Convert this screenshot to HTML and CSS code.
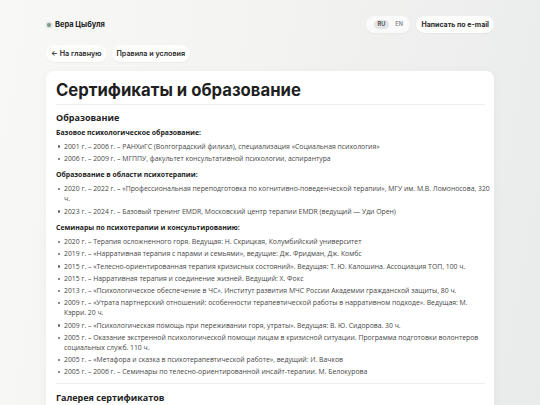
FILE: index.html
```html
<!DOCTYPE html>
<html lang="ru">
<head>
<meta charset="utf-8">
<title>Сертификаты и образование</title>
<link rel="stylesheet" href="styles.css">
</head>
<body>
<div class="page">
  <header class="topbar">
    <div class="brand"><span class="dot"></span>Вера Цыбуля</div>
    <div class="actions">
      <div class="lang"><span class="lang-item active">RU</span><span class="lang-item">EN</span></div>
      <a class="pill strong" href="#">Написать по e-mail</a>
    </div>
  </header>
  <nav class="crumbs">
    <a class="pill" href="#">← На главную</a>
    <a class="pill" href="#">Правила и условия</a>
  </nav>
  <main class="card">
    <h1 class="title">Сертификаты и образование</h1>
    <section class="section">
      <h2 class="h2">Образование</h2>
      <h3 class="h3">Базовое психологическое образование:</h3>
      <ul class="list">
        <li>2001 г. – 2006 г. – РАНХиГС (Волгоградский филиал), специализация «Социальная психология»</li>
        <li>2006 г. – 2009 г. – МГППУ, факультет консультативной психологии, аспирантура</li>
      </ul>
      <h3 class="h3">Образование в области психотерапии:</h3>
      <ul class="list">
        <li>2020 г. – 2022 г. – «Профессиональная переподготовка по когнитивно-поведенческой терапии», МГУ им. М.В. Ломоносова, 320 ч.</li>
        <li>2023 г. – 2024 г. – Базовый тренинг EMDR, Московский центр терапии EMDR (ведущий — Уди Орен)</li>
      </ul>
      <h3 class="h3">Семинары по психотерапии и консультированию:</h3>
      <ul class="list">
        <li>2020 г. – Терапия осложненного горя. Ведущая: Н. Скрицкая, Колумбийский университет</li>
        <li>2019 г. – «Нарративная терапия с парами и семьями», ведущие: Дж. Фридман, Дж. Комбс</li>
        <li>2015 г. – «Телесно-ориентированная терапия кризисных состояний». Ведущая: Т. Ю. Калошина. Ассоциация ТОП, 100 ч.</li>
        <li>2015 г. – Нарративная терапия и соединение жизней. Ведущий: Х. Фокс</li>
        <li>2013 г. – «Психологическое обеспечение в ЧС». Институт развития МЧС России Академии гражданской защиты, 80 ч.</li>
        <li>2009 г. – «Утрата партнерский отношений: особенности терапевтической работы в нарративном подходе». Ведущая: М. Кэрри. 20&nbsp;ч.</li>
        <li>2009 г. – «Психологическая помощь при переживании горя, утраты». Ведущая: В. Ю. Сидорова. 30 ч.</li>
        <li>2005 г. – Оказание экстренной психологической помощи лицам в кризисной ситуации. Программа подготовки волонтеров социальных служб. 110 ч.</li>
        <li>2005 г. – «Метафора и сказка в психотерапевтической работе», ведущий: И. Вачков</li>
        <li>2005 г. – 2006 г. – Семинары по телесно-ориентированной инсайт-терапии. М. Белокурова</li>
      </ul>
    </section>
    <section class="section gallery">
      <h2 class="h2">Галерея сертификатов</h2>
    </section>
  </main>
</div>
</body>
</html>
```
FILE: styles.css
```css
html, body {
  margin: 0;
  padding: 0;
}
body {
  min-height: 405px;
  background: linear-gradient(100deg, #f8f8f6 0%, #f3f3f1 45%, #e9ebeb 100%);
  font-family: "Open Sans", "Noto Sans", sans-serif;
  color: #3a3a3a;
  overflow: hidden;
}
.page {
  width: 448px;
  margin: 0 auto;
  padding-top: 16px;
}
.topbar {
  display: flex;
  justify-content: space-between;
  align-items: center;
  height: 17px;
}
.brand {
  display: flex;
  align-items: center;
  gap: 4px;
  font-family: "Inter", sans-serif;
  font-weight: 700;
  font-size: 7.5px;
  color: #222;
}
.dot {
  width: 4px;
  height: 4px;
  border-radius: 50%;
  background: #7f9a8c;
  box-shadow: 0 0 0 1.5px #dfe6e2;
  margin-left: 1px;
}
.actions {
  display: flex;
  align-items: center;
  gap: 6px;
}
.lang {
  display: flex;
  align-items: center;
  gap: 3px;
  height: 17px;
  padding: 0 4px 0 8px;
  border-radius: 9px;
  background: #fafafa;
  box-shadow: 0 1px 2px rgba(0,0,0,0.04);
}
.lang-item {
  font-family: "Inter", sans-serif;
  font-size: 5.6px;
  font-weight: 600;
  color: #888;
  height: 9px;
  line-height: 9px;
  padding: 0 3.5px;
  border-radius: 5px;
}
.lang-item.active {
  background: #e4e5e4;
  color: #444;
}
.pill {
  display: inline-flex;
  align-items: center;
  height: 17px;
  padding: 0 5px;
  border-radius: 9px;
  background: #fdfdfc;
  box-shadow: 0 1px 2px rgba(0,0,0,0.04);
  font-family: "Inter", sans-serif;
  font-size: 7.2px;
  font-weight: 600;
  color: #2a2a2a;
  text-decoration: none;
}
.pill.strong {
  font-weight: 700;
  font-size: 7px;
}
.crumbs {
  display: flex;
  gap: 5px;
  margin-top: 12px;
}
.card {
  margin-top: 9px;
  background: #ffffff;
  border-radius: 8px;
  box-shadow: 0 2px 10px rgba(0,0,0,0.05);
  padding: 8px 4px 20px 10px;
  min-height: 360px;
}
.title {
  margin: 0 5px 0 0;
  padding: 0 0 3px;
  font-family: "Inter", sans-serif;
  font-size: 16.7px;
  font-weight: 700;
  color: #1f1f1f;
  line-height: 22px;
  border-bottom: 1px solid #eeeeee;
}
.h2 {
  margin: 7px 0 0;
  font-size: 9px;
  font-weight: 700;
  color: #222;
  line-height: 12px;
}
.h3 {
  margin: 6.5px 0 0;
  font-size: 6.9px;
  font-weight: 700;
  color: #222;
  line-height: 9px;
}
.h2 + .h3 {
  margin-top: 3.5px;
}
.list {
  list-style: none;
  margin: 5px 0 0;
  padding: 0;
}
.list li {
  position: relative;
  padding-left: 8px;
  font-size: 6.85px;
  line-height: 10px;
  margin-bottom: 2.25px;
  color: #474747;
}
.list li::before {
  content: "";
  position: absolute;
  left: 2px;
  top: 3.8px;
  width: 2.4px;
  height: 2.4px;
  border-radius: 50%;
  background: #666;
}
.section + .section {
  margin: 6px 5px 0 0;
  border-top: 1px solid #eeeeee;
}
.gallery .h2 {
  margin-top: 7.5px;
}
```
